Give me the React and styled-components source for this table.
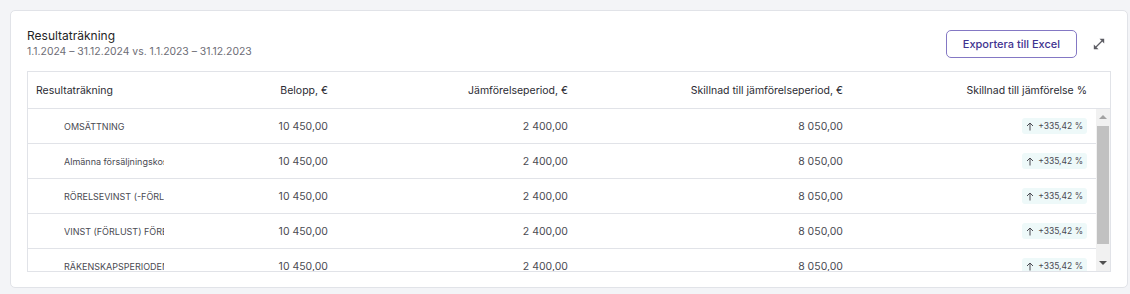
import React from 'react';
import styled, { createGlobalStyle } from 'styled-components';

const GlobalStyle = createGlobalStyle`
    html, body {
        margin: 0;
        padding: 0;
        background: #f3f4f7;
        font-family: Inter, "Noto Sans", sans-serif;
        color: #2b2b33;
    }
`;

const Page = styled.div`
    padding: 10px 2px 6px 10px;
`;

const Card = styled.section`
    background: #fff;
    border: 1px solid #e1e3e8;
    border-radius: 5px;
    padding: 17px 16px 15px 16px;
    height: 278px;
    box-sizing: border-box;
    display: flex;
    flex-direction: column;
`;

const Header = styled.div`
    display: flex;
    align-items: flex-start;
    justify-content: space-between;
    margin-bottom: 12px;
`;

const Titles = styled.div`
    display: flex;
    flex-direction: column;
    gap: 1px;
`;

const Title = styled.h2`
    margin: 0;
    font-size: 12px;
    font-weight: 400;
    line-height: 16px;
    color: #1f1f26;
`;

const Subtitle = styled.div`
    font-size: 10.4px;
    line-height: 14px;
    color: #6d6d76;
`;

const Actions = styled.div`
    display: flex;
    align-items: center;
    gap: 16px;
    padding: 2px 6px 0 0;
`;

const ExportButton = styled.button`
    height: 28px;
    padding: 0 16px;
    border: 1px solid #8478c4;
    border-radius: 5px;
    background: #fff;
    color: #3f3390;
    font-family: inherit;
    font-size: 11px;
    font-weight: 500;
    cursor: pointer;
`;

const IconButton = styled.button`
    width: 12px;
    height: 12px;
    padding: 0;
    border: none;
    background: transparent;
    display: flex;
    align-items: center;
    justify-content: center;
    color: #5c5c63;
`;

const Table = styled.div`
    border: 1px solid #e1e3e8;
    flex: 1;
    min-height: 0;
    display: flex;
    flex-direction: column;
`;

const cols = '170px 138px 240px 275px 244px';

const HeadRow = styled.div`
    display: grid;
    grid-template-columns: ${cols};
    height: 36px;
    border-bottom: 1px solid #e1e3e8;
    font-size: 10.5px;
    color: #2b2b33;
`;

const BodyWrap = styled.div`
    flex: 1;
    min-height: 0;
    display: flex;
`;

const Body = styled.div`
    flex: 1;
    min-width: 0;
    overflow: hidden;
`;

const ScrollTrack = styled.div`
    width: 14px;
    flex: none;
    background: #f1f1f1;
    display: flex;
    flex-direction: column;
`;

const ScrollButton = styled.div`
    height: 16px;
    flex: none;
    display: flex;
    align-items: center;
    justify-content: center;

    &::before {
        content: '';
        border-left: 4px solid transparent;
        border-right: 4px solid transparent;
        ${({ $down }) =>
            $down
                ? 'border-top: 4px solid #505050;'
                : 'border-bottom: 4px solid #a3a3a3;'}
    }
`;

const ScrollThumb = styled.div`
    height: 118px;
    margin: 1px 1px 0;
    background: #c1c1c1;
`;

const ScrollRest = styled.div`
    flex: 1;
`;

const Row = styled.div`
    display: grid;
    grid-template-columns: ${cols};
    height: 34px;
    border-bottom: 1px solid #e1e3e8;
    font-size: 10.5px;
    color: #4a4a52;
`;

const Cell = styled.div`
    display: flex;
    align-items: center;
    justify-content: ${({ $left }) => ($left ? 'flex-start' : 'flex-end')};
    padding: ${({ $indent }) => ($indent ? '0 8px 0 36px' : '0 8px')};
    white-space: nowrap;
    overflow: hidden;
`;

const Name = styled.span`
    display: block;
    width: 100px;
    overflow: hidden;
    white-space: nowrap;
    font-size: 9px;
`;

const Badge = styled.span`
    display: inline-flex;
    align-items: center;
    gap: 4px;
    height: 16px;
    padding: 0 4px;
    border-radius: 3px;
    background: #eef9f9;
    color: #4a4a52;
    font-size: 8.5px;
`;

const ExpandIcon = () => (
    <svg width="12" height="12" viewBox="0 0 12 12" fill="currentColor">
        <path d="M3 9 L9 3" stroke="currentColor" strokeWidth="1.3" />
        <path d="M6.5 0.8 H11.2 V5.5 Z" />
        <path d="M0.8 6.5 V11.2 H5.5 Z" />
    </svg>
);

const UpArrow = () => (
    <svg width="8" height="9" viewBox="0 0 8 9" fill="none" stroke="currentColor" strokeWidth="1">
        <path d="M4 8.5 V1" />
        <path d="M1 4 L4 1 L7 4" />
    </svg>
);

const rows = [
    { name: 'OMSÄTTNING' },
    { name: 'Almänna försäljningskostnader' },
    { name: 'RÖRELSEVINST (-FÖRLUST)' },
    { name: 'VINST (FÖRLUST) FÖRE BOKSLUTSDISPOSITIONER' },
    { name: 'RÄKENSKAPSPERIODENS RESULTAT' },
];

const App = () => {
    return (
        <Page>
            <GlobalStyle />
            <Card>
                <Header>
                    <Titles>
                        <Title>Resultaträkning</Title>
                        <Subtitle>1.1.2024 – 31.12.2024 vs. 1.1.2023 – 31.12.2023</Subtitle>
                    </Titles>
                    <Actions>
                        <ExportButton>Exportera till Excel</ExportButton>
                        <IconButton aria-label="Expandera">
                            <ExpandIcon />
                        </IconButton>
                    </Actions>
                </Header>
                <Table>
                    <HeadRow>
                        <Cell $left>Resultaträkning</Cell>
                        <Cell>Belopp, €</Cell>
                        <Cell>Jämförelseperiod, €</Cell>
                        <Cell>Skillnad till jämförelseperiod, €</Cell>
                        <Cell>Skillnad till jämförelse %</Cell>
                    </HeadRow>
                    <BodyWrap>
                        <Body>
                            {rows.map((r, i) => (
                                <Row key={i}>
                                    <Cell $left $indent>
                                        <Name>{r.name}</Name>
                                    </Cell>
                                    <Cell>10 450,00</Cell>
                                    <Cell>2 400,00</Cell>
                                    <Cell>8 050,00</Cell>
                                    <Cell>
                                        <Badge>
                                            <UpArrow />
                                            +335,42 %
                                        </Badge>
                                    </Cell>
                                </Row>
                            ))}
                        </Body>
                        <ScrollTrack>
                            <ScrollButton />
                            <ScrollThumb />
                            <ScrollRest />
                            <ScrollButton $down />
                        </ScrollTrack>
                    </BodyWrap>
                </Table>
            </Card>
        </Page>
    );
};

export default App;
